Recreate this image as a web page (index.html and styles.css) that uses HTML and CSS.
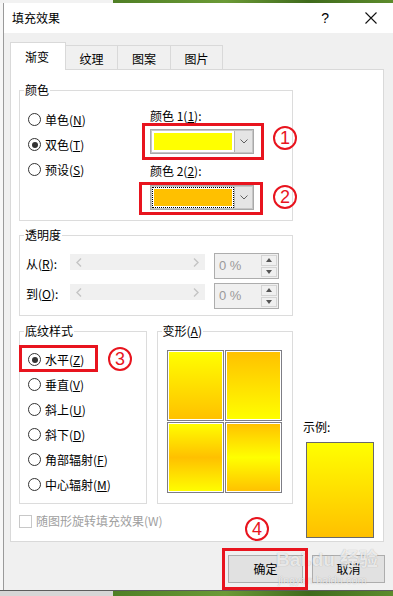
FILE: index.html
```html
<!DOCTYPE html>
<html lang="zh-CN">
<head>
    <meta charset="UTF-8">
    <title>填充效果</title>
    <link rel="stylesheet" href="styles.css">
</head>
<body>
    <div class="strip strip-top"><span class="strip-l"></span><span class="strip-r"></span></div>
    <div class="window">
        <div class="titlebar">
            <span class="title">填充效果</span>
            <span class="help">?</span>
            <svg class="close" width="12" height="12" viewBox="0 0 12 12"><path d="M0.5 0.5L11.5 11.5M11.5 0.5L0.5 11.5" stroke="#111" stroke-width="1.1"/></svg>
        </div>
        <div class="client">
            <div class="tabs">
                <div class="tab active">渐变</div>
                <div class="tab">纹理</div>
                <div class="tab">图案</div>
                <div class="tab">图片</div>
            </div>
            <div class="panel">
                <div class="left">
                    <fieldset class="group">
                        <legend>颜色</legend>
                        <div class="colors-body">
                            <div class="radios">
                                <div class="radio-row"><span class="radio"></span>单色(<u>N</u>)</div>
                                <div class="radio-row"><span class="radio on"></span>双色(<u>T</u>)</div>
                                <div class="radio-row"><span class="radio"></span>预设(<u>S</u>)</div>
                            </div>
                            <div class="pickers">
                                <div class="pick-label">颜色 1(<u>1</u>):</div>
                                <div class="combo">
                                    <div class="swatch-wrap"><div class="swatch yellow"></div></div>
                                    <div class="drop"><svg width="8" height="5" viewBox="0 0 8 5"><path d="M0.5 0.5L4 4L7.5 0.5" fill="none" stroke="#606060"/></svg></div>
                                </div>
                                <div class="pick-label second">颜色 2(<u>2</u>):</div>
                                <div class="combo combo-2">
                                    <div class="swatch-wrap focus"><div class="swatch orange"></div></div>
                                    <div class="drop"><svg width="8" height="5" viewBox="0 0 8 5"><path d="M0.5 0.5L4 4L7.5 0.5" fill="none" stroke="#606060"/></svg></div>
                                </div>
                            </div>
                        </div>
                    </fieldset>

                    <fieldset class="group alpha">
                        <legend>透明度</legend>
                        <div class="alpha-body">
                            <div class="alpha-row">
                                <span class="alpha-label">从(<u>R</u>):</span>
                                <div class="slider">
                                    <svg width="6" height="9" viewBox="0 0 6 9"><path d="M5 0.5L1 4.5L5 8.5" fill="none" stroke="#c4c4c4" stroke-width="1.4"/></svg>
                                    <svg width="6" height="9" viewBox="0 0 6 9"><path d="M1 0.5L5 4.5L1 8.5" fill="none" stroke="#c4c4c4" stroke-width="1.4"/></svg>
                                </div>
                                <div class="spin">
                                    <span class="spin-val">0 %</span>
                                    <div class="spin-btns">
                                        <span class="spin-btn"><svg width="6" height="4" viewBox="0 0 6 4"><path d="M0 4L3 0L6 4Z" fill="#555"/></svg></span>
                                        <span class="spin-btn"><svg width="6" height="4" viewBox="0 0 6 4"><path d="M0 0L3 4L6 0Z" fill="#555"/></svg></span>
                                    </div>
                                </div>
                            </div>
                            <div class="alpha-row">
                                <span class="alpha-label">到(<u>O</u>):</span>
                                <div class="slider">
                                    <svg width="6" height="9" viewBox="0 0 6 9"><path d="M5 0.5L1 4.5L5 8.5" fill="none" stroke="#c4c4c4" stroke-width="1.4"/></svg>
                                    <svg width="6" height="9" viewBox="0 0 6 9"><path d="M1 0.5L5 4.5L1 8.5" fill="none" stroke="#c4c4c4" stroke-width="1.4"/></svg>
                                </div>
                                <div class="spin">
                                    <span class="spin-val">0 %</span>
                                    <div class="spin-btns">
                                        <span class="spin-btn"><svg width="6" height="4" viewBox="0 0 6 4"><path d="M0 4L3 0L6 4Z" fill="#555"/></svg></span>
                                        <span class="spin-btn"><svg width="6" height="4" viewBox="0 0 6 4"><path d="M0 0L3 4L6 0Z" fill="#555"/></svg></span>
                                    </div>
                                </div>
                            </div>
                        </div>
                    </fieldset>

                    <div class="style-row">
                        <fieldset class="group shading">
                            <legend>底纹样式</legend>
                            <div class="shading-body">
                                <div class="radio-row"><span class="radio on"></span>水平(<u>Z</u>)</div>
                                <div class="radio-row"><span class="radio"></span>垂直(<u>V</u>)</div>
                                <div class="radio-row"><span class="radio"></span>斜上(<u>U</u>)</div>
                                <div class="radio-row"><span class="radio"></span>斜下(<u>D</u>)</div>
                                <div class="radio-row"><span class="radio"></span>角部辐射(<u>F</u>)</div>
                                <div class="radio-row"><span class="radio"></span>中心辐射(<u>M</u>)</div>
                            </div>
                        </fieldset>
                        <fieldset class="group variants">
                            <legend>变形(<u>A</u>)</legend>
                            <div class="variants-body">
                                <div class="cell v1"></div>
                                <div class="cell v2"></div>
                                <div class="cell v3"></div>
                                <div class="cell v4"></div>
                            </div>
                        </fieldset>
                    </div>

                    <div class="check-row"><span class="check"></span>随图形旋转填充效果(W)</div>
                </div>
                <div class="right">
                    <div class="sample-label">示例:</div>
                    <div class="sample"></div>
                </div>
            </div>
            <div class="buttons">
                <div class="btn ok">确定</div>
                <div class="btn cancel">取消</div>
            </div>
        </div>
    </div>
    <div class="strip strip-bottom"><span class="strip-l"></span><span class="strip-r"></span></div>

    <div class="watermark">
        <span class="wm-big">Bai<span class="paw">&#9679;</span>du 经验</span>
        <span class="wm-small">jingyan.baidu.com</span>
    </div>

    <div class="mark box-1"></div>
    <div class="mark box-2"></div>
    <div class="mark box-3"></div>
    <div class="mark box-4"></div>
    <div class="num n-1">1</div>
    <div class="num n-2">2</div>
    <div class="num n-3">3</div>
    <div class="num n-4">4</div>
</body>
</html>
```

FILE: styles.css
```css
* {
    box-sizing: border-box;
}
body {
    margin: 0;
    width: 393px;
    height: 596px;
    overflow: hidden;
    position: relative;
    background: #f7f7f7;
    font-family: "Noto Sans CJK SC", "Microsoft YaHei", sans-serif;
    font-size: 12px;
    line-height: 16px;
    color: #000;
}
u {
    text-decoration: underline;
    text-underline-offset: 1px;
}

/* desktop strips above and below the dialog */
.strip {
    display: flex;
}
.strip-top {
    height: 3px;
}
.strip-bottom {
    height: 6px;
    border-top: 1px solid #5c5c5c;
}
.strip-l {
    width: 113px;
    background: #f2f2f2;
}
.strip-bottom .strip-l {
    background: #d6d6d6;
}
.strip-r {
    flex: 1;
    background: linear-gradient(90deg, #4f7f25, #6b9a36 40%, #3f6a1c 70%, #5d8c2c);
}

/* window */
.window {
    margin-left: 3px;
    height: 587px;
    border-left: 1px solid #9a9a9a;
    display: flex;
    flex-direction: column;
}
.titlebar {
    height: 30px;
    background: #fff;
    display: flex;
    align-items: center;
    padding-left: 8px;
}
.title {
    font-size: 12px;
    flex: 1;
}
.help {
    font-family: "Liberation Sans", sans-serif;
    font-size: 14px;
    margin-right: 36px;
    margin-top: -1px;
}
.close {
    margin-right: 16px;
}
.client {
    flex: 1;
    background: #f0f0f0;
    padding: 9px 9px 0 6px;
}

/* tabs */
.tabs {
    display: flex;
    align-items: flex-end;
    height: 27px;
}
.tab {
    height: 24px;
    width: 53px;
    margin-left: -1px;
    border: 1px solid #d9d9d9;
    border-bottom: none;
    background: #f0f0f0;
    display: flex;
    align-items: center;
    justify-content: center;
    padding-top: 2px;
}
.tab.active {
    position: relative;
    z-index: 1;
    margin-left: 0;
    width: 56px;
    height: 28px;
    margin-bottom: -1px;
    background: #fff;
    padding-top: 0;
    padding-right: 2px;
}
.tab:nth-child(3) {
    width: 54px;
}

.panel {
    height: 473px;
    border: 1px solid #d9d9d9;
    background: #fff;
    display: flex;
    padding: 12px 9px 0 8px;
}
.left {
    width: 274px;
    display: flex;
    flex-direction: column;
}
.right {
    width: 71px;
    margin-left: 10px;
    display: flex;
    flex-direction: column;
    justify-content: flex-end;
    padding-bottom: 3px;
}

/* group boxes */
.group {
    margin: 0;
    padding: 0;
    min-width: 0;
    border: 1px solid #dcdcdc;
}
.group legend {
    padding: 0 1px;
    margin-left: 4px;
    line-height: 16px;
}
.colors-body {
    display: flex;
    align-items: flex-start;
    padding: 9px 0 10px 8px;
}
.radios {
    width: 122px;
}
.radio-row {
    height: 25px;
    display: flex;
    align-items: center;
    white-space: nowrap;
}
.radio {
    width: 13px;
    height: 13px;
    border-radius: 50%;
    border: 1px solid #333;
    margin-right: 4px;
    display: flex;
    align-items: center;
    justify-content: center;
    flex-shrink: 0;
}
.radio.on::after {
    content: "";
    width: 6px;
    height: 6px;
    border-radius: 50%;
    background: #333;
}
.pickers {
    padding-top: 1px;
}
.pick-label {
    height: 16px;
}
.pick-label.second {
    margin-top: 9px;
}
.combo {
    margin-top: 5px;
    width: 104px;
    height: 25px;
    border: 1px solid #a9a9a9;
    box-shadow: inset 0 0 0 1px #c6c6c6;
    display: flex;
}
.combo-2 {
    margin-top: 6px;
}
.swatch-wrap {
    flex: 1;
    padding: 3px 2px 3px 3px;
}
.swatch-wrap.focus {
    padding: 2px 1px 2px 2px;
}
.swatch-wrap.focus .swatch {
    outline: 1px dotted #000;
    outline-offset: 0;
    border: 1px solid #fff;
}
.swatch {
    height: 100%;
}
.yellow {
    background: #ffff00;
}
.orange {
    background: #ffc000;
}
.drop {
    width: 18px;
    background: #e5e5e5;
    border-left: 1px solid #b4b4b4;
    margin: 1px 1px 1px 0;
    display: flex;
    align-items: center;
    justify-content: center;
}

/* transparency */
.alpha {
    margin-top: 6px;
}
.alpha-body {
    padding: 10px 0 6px 6px;
    display: flex;
    flex-direction: column;
    gap: 4px;
}
.alpha-row {
    display: flex;
    align-items: flex-start;
    height: 26px;
}
.alpha-label {
    width: 44px;
    line-height: 22px;
}
.slider {
    width: 135px;
    height: 16px;
    margin-top: 1px;
    background: #f0f0f0;
    display: flex;
    align-items: center;
    justify-content: space-between;
    padding: 0 6px;
}
.spin {
    width: 65px;
    height: 26px;
    margin-left: 9px;
    border: 1px solid #adadad;
    background: #f0f0f0;
    display: flex;
    align-items: center;
    padding: 1px;
}
.spin-val {
    flex: 1;
    padding-left: 3px;
    font-family: "Liberation Sans", sans-serif;
    font-size: 13px;
    color: #9a9a9a;
}
.spin-btns {
    width: 16px;
    height: 100%;
    display: flex;
    flex-direction: column;
    gap: 1px;
}
.spin-btn {
    flex: 1;
    background: #f0f0f0;
    border: 1px solid #d4d4d4;
    display: flex;
    align-items: center;
    justify-content: center;
}

/* shading style + variants */
.style-row {
    margin-top: 7px;
    display: flex;
    gap: 10px;
}
.shading {
    width: 128px;
}
.shading-body {
    padding: 8px 0 6px 8px;
}
.variants {
    width: 137px;
}
.variants-body {
    padding: 11px 0 0 9px;
    display: grid;
    grid-template-columns: 57px 57px;
    grid-template-rows: 71px 71px;
    gap: 1px;
}
.cell {
    border: 1px solid #7d7d85;
    box-shadow: inset 0 0 0 1px #fff;
}
.v1 {
    background: linear-gradient(#ffff00, #ffc000);
}
.v2 {
    background: linear-gradient(#ffc000, #ffff00);
}
.v3 {
    background: linear-gradient(#ffff00, #ffc000 50%, #ffff00);
}
.v4 {
    background: linear-gradient(#ffc000, #ffff00 50%, #ffc000);
}

.check-row {
    margin-top: 10px;
    display: flex;
    align-items: center;
    color: #a0a0a0;
    height: 14px;
}
.check {
    width: 13px;
    height: 13px;
    border: 1px solid #c8c8c8;
    margin-right: 4px;
}

.sample-label {
    height: 16px;
    margin-bottom: 7px;
}
.sample {
    width: 68px;
    height: 96px;
    margin-left: 3px;
    border: 1px solid #696969;
    background: linear-gradient(#ffff00, #ffc000);
}

/* buttons */
.buttons {
    margin-top: 13px;
    margin-right: -1px;
    display: flex;
    justify-content: flex-end;
    gap: 9px;
}
.btn {
    height: 28px;
    width: 75px;
    background: #e1e1e1;
    border: 1px solid #adadad;
    display: flex;
    align-items: center;
    justify-content: center;
}
.btn.cancel {
    width: 73px;
}

/* baidu watermark */
.watermark {
    position: absolute;
    left: 276px;
    top: 549px;
    display: flex;
    flex-direction: column;
    color: rgba(255, 255, 255, 0.75);
    text-shadow: 0 0 1px rgba(0, 0, 0, 0.3);
}
.wm-big {
    font-family: "Liberation Sans", "Noto Sans CJK SC", sans-serif;
    font-size: 19px;
    line-height: 22px;
    font-weight: bold;
}
.paw {
    font-size: 10px;
}
.wm-small {
    font-family: "Liberation Sans", sans-serif;
    font-size: 11px;
    line-height: 12px;
    margin-left: 2px;
}

/* red annotations */
.mark {
    position: absolute;
    border: 3px solid #e8141e;
}
.box-1 { left: 142px; top: 123px; width: 122px; height: 37px; }
.box-2 { left: 139px; top: 182px; width: 124px; height: 33px; }
.box-3 { left: 19px; top: 345px; width: 79px; height: 27px; }
.box-4 { left: 222px; top: 548px; width: 86px; height: 42px; }
.num {
    position: absolute;
    width: 24px;
    height: 24px;
    border: 2px solid #e8141e;
    border-radius: 50%;
    color: #e8141e;
    font-family: "Liberation Sans", sans-serif;
    font-size: 18px;
    line-height: 20px;
    text-align: center;
}
.n-1 { left: 273px; top: 126px; }
.n-2 { left: 273px; top: 185px; }
.n-3 { left: 108px; top: 347px; }
.n-4 { left: 245px; top: 517px; }
```
